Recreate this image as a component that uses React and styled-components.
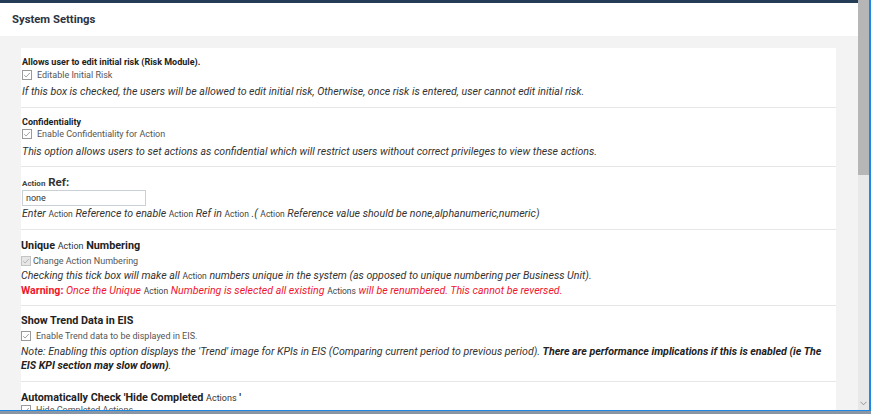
import React from 'react';
import styled, { createGlobalStyle } from 'styled-components';

const Global = createGlobalStyle`
  html, body { margin: 0; padding: 0; overflow: hidden; }
  body { font-family: Roboto, "Liberation Sans", Arial, sans-serif; color: #333; }
`;

const Check = ({ disabled }) => (
  <Box disabled={disabled}>
    <svg width="8" height="8" viewBox="0 0 8 8">
      <path d="M1.2 4.2 L3.1 6 L6.8 2" fill="none" stroke={disabled ? '#aaa' : '#8a8a8a'} strokeWidth="0.8" />
    </svg>
  </Box>
);

const A = ({ children = 'Action' }) => <Small>{children}</Small>;

const App = () => {
  return (
    <Screen>
      <Global />
      <Frame>
        <Main>
          <TopBar />
          <Header>System Settings</Header>
          <Body>
            <Card>
              <Section pt={8} pb={8}>
                <Title>Allows user to edit initial risk (Risk Module).</Title>
                <CheckRow><Check /><Label>Editable Initial Risk</Label></CheckRow>
                <Desc mt={2}>If this box is checked, the users will be allowed to edit initial risk, Otherwise, once risk is entered, user cannot edit initial risk.</Desc>
              </Section>
              <Section pt={8} pb={7}>
                <Title>Confidentiality</Title>
                <CheckRow mt={-1}><Check /><Label>Enable Confidentiality for Action</Label></CheckRow>
                <Desc mt={3}>This option allows users to set actions as confidential which will restrict users without correct privileges to view these actions.</Desc>
              </Section>
              <Section pt={8} pb={8}>
                <FieldTitle><A /> Ref:</FieldTitle>
                <Input defaultValue="none" />
                <Desc>Enter <A /> Reference to enable <A /> Ref in <A /> .( <A /> Reference value should be none,alphanumeric,numeric)</Desc>
              </Section>
              <Section pt={8} pb={7} tight>
                <BigTitle>Unique <A /> Numbering</BigTitle>
                <CheckRow gap={2} mt={1}><Check disabled /><Label>Change Action Numbering</Label></CheckRow>
                <Desc>Checking this tick box will make all <A /> numbers unique in the system (as opposed to unique numbering per Business Unit).</Desc>
                <Warn><b>Warning:</b> <i>Once the Unique</i> <A /> <i>Numbering is selected all existing</i> <A>Actions</A> <i>will be renumbered. This cannot be reversed.</i></Warn>
              </Section>
              <Section pt={7} pb={8} tight>
                <BigTitle>Show Trend Data in EIS</BigTitle>
                <CheckRow mt={1}><Check /><Label>Enable Trend data to be displayed in EIS.</Label></CheckRow>
                <Desc mt={2} lh={14}>Note: Enabling this option displays the 'Trend' image for KPIs in EIS (Comparing current period to previous period). <b>There are performance implications if this is enabled (ie The EIS KPI section may slow down)</b>.</Desc>
              </Section>
              <Section pt={8} last tight>
                <BigTitle>Automatically Check 'Hide Completed <A>Actions</A> '</BigTitle>
                <CheckRow mt={-2}><Check /><Label>Hide Completed Actions</Label></CheckRow>
              </Section>
            </Card>
          </Body>
        </Main>
        <Scrollbar>
          <Thumb />
          <Track />
          <Arrow>
            <svg width="7" height="5" viewBox="0 0 7 5">
              <path d="M0.5 0.8 L3.5 3.8 L6.5 0.8" fill="none" stroke="#888" strokeWidth="0.9" />
            </svg>
          </Arrow>
        </Scrollbar>
        <Edge />
      </Frame>
      <BottomStrip />
    </Screen>
  );
};

export default App;

const Screen = styled.div`
  display: flex;
  flex-direction: column;
  width: 871px;
  height: 414px;
  overflow: hidden;
`;

const Frame = styled.div`
  display: flex;
  flex: 1;
  min-height: 0;
`;

const Main = styled.div`
  flex: 1;
  display: flex;
  flex-direction: column;
  background: #f3f3f3;
  overflow: hidden;
`;

const TopBar = styled.div`
  height: 3px;
  background: #243c55;
  flex-shrink: 0;
`;

const Header = styled.div`
  height: 33px;
  flex-shrink: 0;
  background: #fff;
  display: flex;
  align-items: center;
  padding-left: 12px;
  font-size: 11.3px;
  font-weight: 700;
  color: #2b3442;
`;

const Body = styled.div`
  padding: 12px 22px 0 21px;
`;

const Card = styled.div`
  background: #fff;
`;

const Section = styled.div`
  padding: ${p => p.pt}px 1px ${p => p.pb || 0}px ${p => (p.tight ? 0 : 1)}px;
  border-bottom: ${p => (p.last ? 'none' : '1px solid #e6e6e6')};
`;

const Title = styled.div`
  font-size: 9px;
  font-weight: 700;
  color: #222;
  line-height: 12px;
`;

const FieldTitle = styled.div`
  font-size: 11.5px;
  font-weight: 700;
  color: #333;
  line-height: 14px;
  span { font-size: 8px; font-weight: 700; }
`;

const BigTitle = styled.div`
  font-size: 10.8px;
  font-weight: 700;
  color: #222;
  line-height: 15px;
  span { font-size: 9px; font-weight: 400; color: #333; }
`;

const Small = styled.span`
  font-size: 8.5px;
  line-height: 1;
  font-style: normal;
  font-weight: 400;
  color: #444;
`;

const CheckRow = styled.div`
  display: flex;
  align-items: center;
  gap: ${p => p.gap || 5}px;
  height: 14px;
  margin-top: ${p => p.mt || 0}px;
`;

const Box = styled.span`
  box-sizing: border-box;
  width: 10px;
  height: 10px;
  border: 1px solid ${p => (p.disabled ? '#c4c4c4' : '#9a9a9a')};
  background: ${p => (p.disabled ? '#e6e6e6' : '#fff')};
  display: flex;
  align-items: center;
  justify-content: center;
`;

const Label = styled.span`
  font-size: 9px;
  color: #555;
`;

const Desc = styled.div`
  font-size: 10.6px;
  font-style: italic;
  color: #333;
  line-height: ${p => p.lh || 15}px;
  margin-top: ${p => p.mt || 0}px;
  b { font-weight: 700; color: #222; }
`;

const Warn = styled.div`
  font-size: 10.6px;
  color: #f0162e;
  line-height: 15px;
  b { font-weight: 700; }
  i { font-style: italic; }
`;

const Input = styled.input`
  display: block;
  box-sizing: border-box;
  width: 124px;
  height: 16px;
  margin: 1px 0 0;
  padding: 0 3px;
  border: 1px solid #c9d0d8;
  font-family: Roboto, "Liberation Sans", Arial, sans-serif;
  font-size: 9px;
  color: #333;
  outline: none;
`;

const Scrollbar = styled.div`
  width: 11px;
  display: flex;
  flex-direction: column;
  background: #e8e8e8;
`;

const Thumb = styled.div`
  height: 175px;
  background: #b6b6b6;
`;

const Track = styled.div`
  flex: 1;
`;

const Arrow = styled.div`
  height: 14px;
  display: flex;
  justify-content: center;
  align-items: center;
`;

const Edge = styled.div`
  width: 2px;
  background: #1e88e5;
`;

const BottomStrip = styled.div`
  height: 3px;
  flex-shrink: 0;
  border-top: 1px solid #1e88e5;
  background: #8a96a3;
`;
